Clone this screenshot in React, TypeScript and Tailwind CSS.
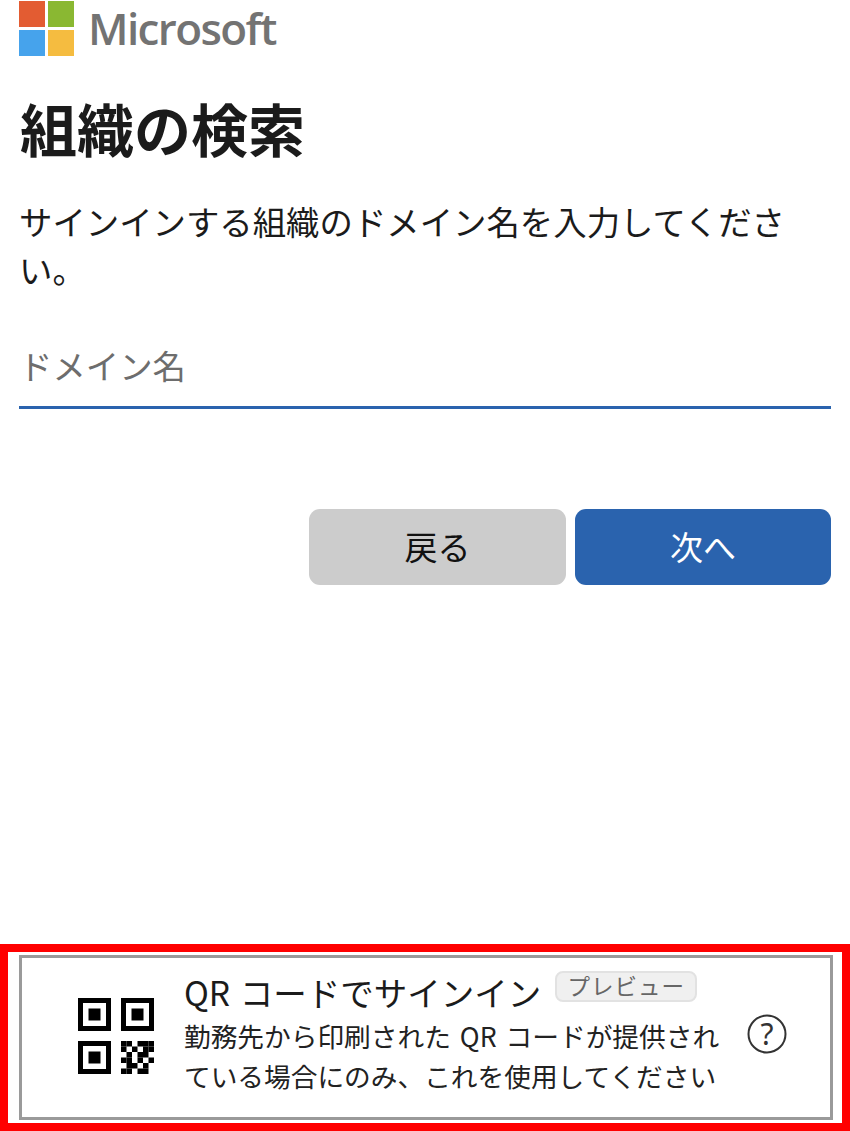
const cjk = "font-['Noto_Sans_CJK_JP','Noto_Sans',sans-serif]";

const qrCells = [
  [1, 1, 0, 1, 1, 1],
  [1, 0, 1, 0, 1, 1],
  [0, 1, 0, 1, 1, 0],
  [1, 1, 0, 1, 0, 1],
  [0, 1, 1, 0, 1, 0],
  [1, 1, 0, 1, 1, 0],
];

function MicrosoftLogo() {
  return (
    <div className="flex items-center h-[56px]">
      <div className="grid grid-cols-[26px_26px] grid-rows-[26px_26px] gap-[3px] w-[55px] shrink-0">
        <div className="bg-[#e35c32]" />
        <div className="bg-[#8ab832]" />
        <div className="bg-[#46a3ec]" />
        <div className="bg-[#f5bc40]" />
      </div>
      <span className="ml-[14px] font-['Open_Sans',sans-serif] font-semibold text-[44px] leading-[56px] tracking-[-1.6px] text-[#737373]">
        Microsoft
      </span>
    </div>
  );
}

function Finder({ x, y }: { x: number; y: number }) {
  return (
    <g transform={`translate(${x} ${y})`}>
      <path fillRule="evenodd" d="M0 0h33v33H0zM5 5v23h23V5z" />
      <rect x="10.5" y="10.5" width="12" height="12" />
    </g>
  );
}

function QrIcon() {
  return (
    <svg width="76" height="76" viewBox="0 0 76 76" className="shrink-0 fill-black -mt-[4px]">
      <Finder x={0} y={0} />
      <Finder x={43} y={0} />
      <Finder x={0} y={43} />
      <g transform="translate(43 43)">
        {qrCells.map((row, r) =>
          row.map((on, c) =>
            on ? <rect key={`${r}-${c}`} x={c * 5.5} y={r * 5.5} width="5.5" height="5.5" /> : null,
          ),
        )}
      </g>
    </svg>
  );
}

export default function App() {
  return (
    <div className={`${cjk} w-[850px] h-[1131px] bg-white flex flex-col overflow-hidden text-[#1b1b1b]`}>
      <main className="flex-1 pl-[19px] pr-[19px]">
        <MicrosoftLogo />
        <h1 className="mt-[33px] ml-[1px] text-[57px] leading-[76px] font-bold">組織の検索</h1>
        <p className="mt-[32px] text-[33.4px] leading-[48px]">
          サインインする組織のドメイン名を入力してください。
        </p>
        <input
          placeholder="ドメイン名"
          className="mt-[50px] block w-full h-[66px] pb-[20px] border-b-[3px] border-[#2a63ae] bg-transparent text-[33.4px] outline-none placeholder:text-[#6d6d6d]"
        />
        <div className="mt-[100px] flex justify-end gap-[9px]">
          <button className="w-[257px] h-[76px] rounded-[11px] bg-[#cccccc] text-[33px] text-[#111]">戻る</button>
          <button className="w-[256px] h-[76px] rounded-[11px] bg-[#2a63ae] text-[33px] text-white">次へ</button>
        </div>
      </main>
      <div className="h-[187px] border-[8px] border-[#ff0000] pt-[3px] pb-[3px] pl-[11px] pr-[9px]">
        <div className="h-full border-[3px] border-[#9a9a9a] flex items-center pl-[56px]">
          <QrIcon />
          <div className="ml-[30px] w-[548px] shrink-0 -mt-[10px]">
            <div className="flex items-center">
              <span className="text-[33.5px] leading-[44px] [word-spacing:2px]">QR コードでサインイン</span>
              <span className="ml-[14px] -mt-[10px] w-[142px] h-[31px] rounded-[8px] bg-[#f0f0f0] border-2 border-[#e2e2e2] text-[22.5px] leading-[24px] text-center tracking-[1px] text-[#666]">
                プレビュー
              </span>
            </div>
            <p className="mt-[2px] w-[546px] text-[26.7px] leading-[40px] text-[#222] [word-spacing:3px]">
              勤務先から印刷された QR コードが提供されている場合にのみ、これを使用してください
            </p>
          </div>
          <svg width="40" height="40" viewBox="0 0 40 40" className="ml-[15px] shrink-0 -mt-[8px]">
            <circle cx="20" cy="20" r="18.5" fill="none" stroke="#333" strokeWidth="2" />
            <text x="20" y="31" textAnchor="middle" fontSize="30" fill="#333" fontFamily="Noto Sans, sans-serif">?</text>
          </svg>
        </div>
      </div>
    </div>
  );
}
